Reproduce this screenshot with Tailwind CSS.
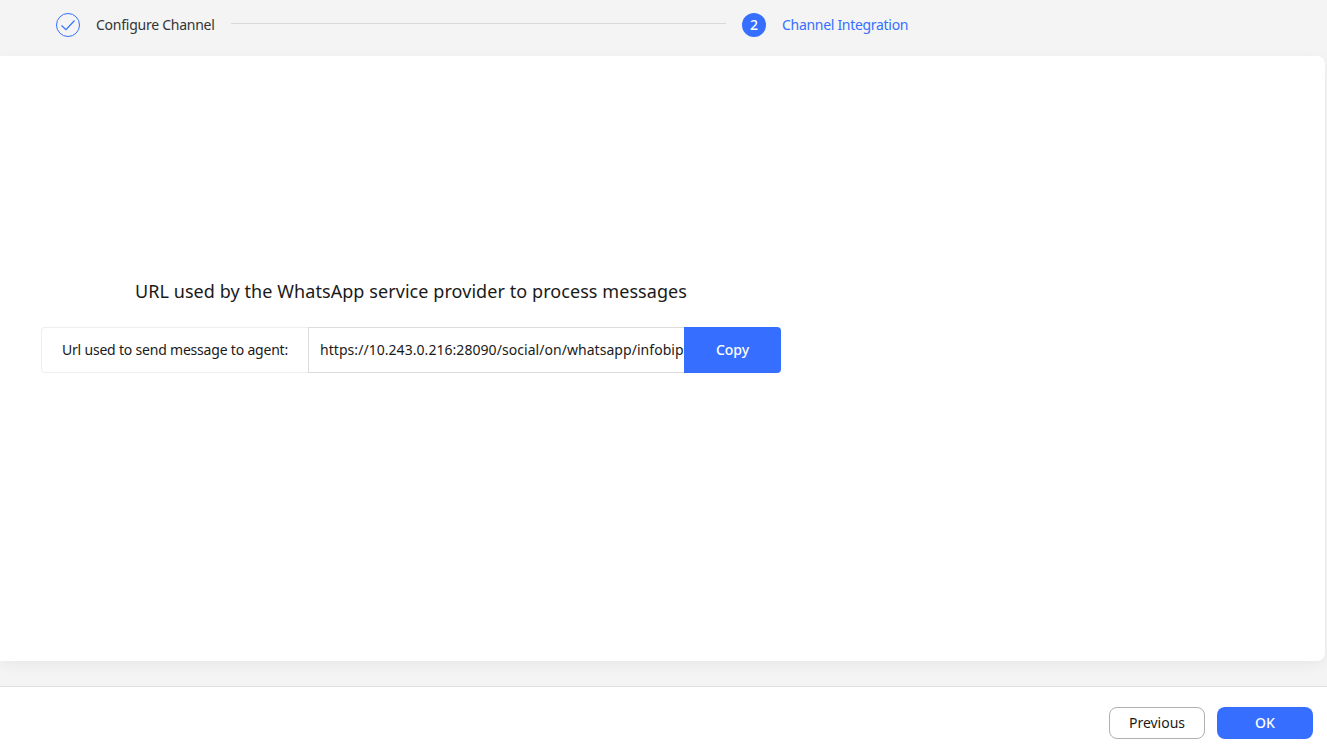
<!DOCTYPE html>
<html lang="en">
<head>
<meta charset="utf-8"/>
<title>Channel Integration</title>
<script src="https://cdn.jsdelivr.net/npm/@tailwindcss/browser@4"></script>
</head>
<body class="h-[747px] w-[1327px] overflow-hidden flex flex-col bg-[#f4f4f4] font-['Noto_Sans',sans-serif] text-[#1a1a1a]">
  <!-- steps -->
  <div class="h-[56px] pl-[56px] pt-[13px] flex items-start">
    <div class="w-[24px] h-[24px] rounded-full border border-[#366fff] flex items-center justify-center">
      <svg width="16" height="16" viewBox="0 0 16 16" fill="none" stroke="#366fff" stroke-width="1.2"><path d="M1.5 8.5l4.5 4.2L14.5 3.5"/></svg>
    </div>
    <span class="ml-[16px] w-[119px] whitespace-nowrap text-sm tracking-[-0.25px] leading-[24px] text-[#333]">Configure Channel</span>
    <div class="ml-[16px] mt-[10px] w-[495px] h-px bg-[#d9d9d9]"></div>
    <div class="ml-[16px] w-[24px] h-[24px] rounded-full bg-[#366fff] text-white text-sm font-medium flex items-center justify-center">2</div>
    <span class="ml-[16px] text-sm tracking-[-0.3px] leading-[24px] text-[#366fff]">Channel Integration</span>
  </div>

  <!-- main card -->
  <div class="h-[605px] w-[1325px] bg-white rounded-r-lg pl-[41px] pt-[220px] shadow-[0_4px_14px_rgba(0,0,0,0.05)]">
    <div class="w-[740px]">
      <h2 class="text-lg tracking-[0.07px] leading-[30px] text-center">URL used by the WhatsApp service provider to process messages</h2>
      <div class="mt-[21px] flex h-[46px] text-sm">
        <div class="w-[267px] border border-r-0 border-[#eeeeee] rounded-l flex items-center justify-center tracking-[-0.2px]">Url used to send message to agent:</div>
        <div class="w-[376px] border border-[#dcdcdc] border-r-0 pl-[11px] flex items-center whitespace-nowrap overflow-hidden tracking-[0.05px]">https://10.243.0.216:28090/social/on/whatsapp/infobip</div>
        <button class="w-[97px] bg-[#366fff] text-white font-medium rounded-r">Copy</button>
      </div>
    </div>
  </div>

  <!-- footer -->
  <div class="mt-[25px] flex-1 bg-white border-t border-[#e0e0e0] flex justify-end items-start pt-[20px] pr-[14px] gap-[12px] text-sm">
    <button class="w-[96px] h-[32px] border border-[#b0b0b0] rounded-lg bg-white">Previous</button>
    <button class="w-[96px] h-[32px] rounded-lg bg-[#366fff] text-white font-medium">OK</button>
  </div>
</body>
</html>
